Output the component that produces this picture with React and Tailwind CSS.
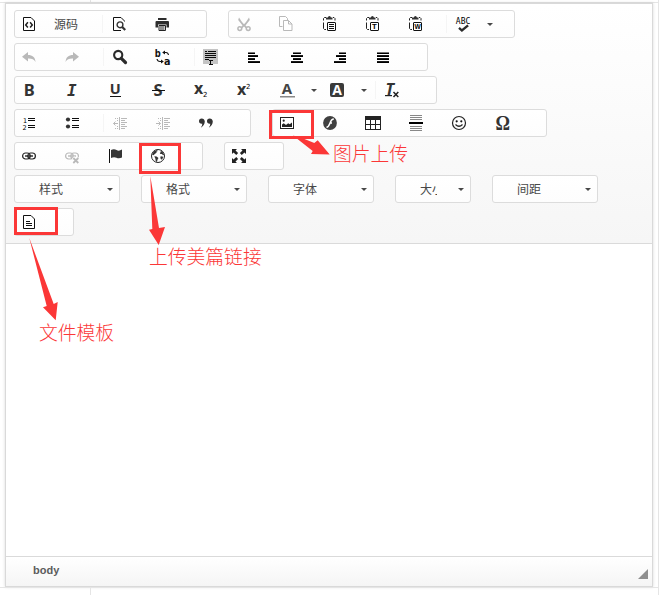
import React from "react";

const K = "#0d0d0d";
const G = "#b9b9b9";

function Svg({ children, crisp }) {
  return (
    <svg
      width="16"
      height="16"
      viewBox="0 0 16 16"
      fill="none"
      className="block shrink-0 overflow-visible"
      shapeRendering={crisp ? "crispEdges" : "auto"}
    >
      {children}
    </svg>
  );
}

function Glyph({ x, y, size, weight = 700, color = "#333", italic, family = "Open Sans, sans-serif", children, len }) {
  return (
    <text
      x={x}
      y={y}
      fontSize={size}
      fontWeight={weight}
      fill={color}
      fontStyle={italic ? "italic" : "normal"}
      fontFamily={family}
      textLength={len}
      lengthAdjust={len ? "spacingAndGlyphs" : undefined}
    >
      {children}
    </text>
  );
}

// Solid blocks given as [x, y, width, height]
function Bars({ list, color = K }) {
  return list.map(([x, y, w, h], i) => <rect key={i} x={x} y={y} width={w} height={h} fill={color} />);
}

function Page({ children }) {
  return (
    <Svg>
      <path d="M2.500 1.500h7.500l3.500 3.500v9.500h-11z" stroke="#111" fill="#fff" />
      {children}
    </Svg>
  );
}

const Source = () => (
  <Page>
    <path d="M6.900 6.300 4.700 8.900l2.200 2.600M9.100 6.300l2.200 2.600-2.200 2.600" stroke="#222" strokeWidth="1.500" />
  </Page>
);

const Preview = () => (
  <Svg>
    <path d="M13.500 5.500V5L10 1.500H2.500v13h7.500" stroke="#111" />
    <circle cx="9" cy="8.800" r="2.900" stroke="#333" strokeWidth="1.400" fill="#fff" />
    <path d="m11.200 11 3 3" stroke="#333" strokeWidth="2.200" />
  </Svg>
);

const Print = () => (
  <Svg>
    <path d="M4 2h8.500v2H4zM2.500 5h11.500q1 0 1 1v5.500h-2.500V8.500h-8.500v3H1.500V6q0-1 1-1z" fill="#2d2d2d" />
    <path d="M5 9.500h6.500v5H5z" fill="#fff" stroke="#222" />
    <path d="M6 11h4.500M6 13h4.500" stroke="#222" />
  </Svg>
);

const Cut = () => (
  <Svg>
    <path d="M4 1.500 7 6l2 2.300L11 6l3-4.500.8 2.500-4.300 5.500 2 2-1.300 1.200L9 10.500l-2.200 2.200-1.300-1.200 2-2L3.200 4z" fill={G} />
    <circle cx="4.800" cy="12.600" r="1.900" stroke={G} strokeWidth="1.500" />
    <circle cx="13.200" cy="12.600" r="1.900" stroke={G} strokeWidth="1.500" />
  </Svg>
);

const Copy = () => (
  <Svg>
    <path d="M4.500 10.500h-3v-10h6l2 2V4" stroke={G} />
    <path d="M5.500 4.500h5l3.500 3.500v6.500H5.500z" stroke={G} fill="#fff" />
    <path d="M10.500 4.500V8H14" stroke={G} />
  </Svg>
);

function Clipboard({ children }) {
  return (
    <Svg>
      <path d="M5 1.500H3.500l-1 1v2M2.500 6.500v6l1 1H5M12 1.500h1l1 1v2" stroke="#222" />
      <path d="M5 3.500V1.500h1.900Q7 0 8.400 0t1.500 1.500h1.600v2z" fill="#333" />
      <rect x="6.500" y="6.500" width="8" height="8" rx=".5" fill="#fff" stroke="#111" />
      {children}
    </Svg>
  );
}

const Paste = () => (
  <Clipboard>
    <path d="M8 8.500h5M8 10.500h5M8 12.500h5" stroke="#111" />
  </Clipboard>
);
const PasteText = () => (
  <Clipboard>
    <Glyph x="8.100" y="13.200" size="7.800" color="#000" family="Liberation Sans, sans-serif">T</Glyph>
  </Clipboard>
);
const PasteWord = () => (
  <Clipboard>
    <Glyph x="7.500" y="13" size="7.500" color="#000" len={6.200} family="Liberation Sans, sans-serif">W</Glyph>
  </Clipboard>
);

const Spell = () => (
  <Svg>
    <Glyph x="0.800" y="8" size="9.500" weight={400} color="#000" len={14.500} family="DejaVu Sans Mono, monospace">ABC</Glyph>
    <path d="m4 11.800 2.900 2.700 6.200-5.200" stroke="#2b2b2b" strokeWidth="2.300" />
  </Svg>
);

const Undo = () => (
  <Svg>
    <path d="M1 7.700 7 3v2.900c4.500 0 7 2 7.500 7.100C12.800 10.200 11 9.500 7 9.600v3z" fill={G} />
  </Svg>
);
const Redo = () => (
  <Svg>
    <path d="M15 7.700 9 3v2.900c-4.500 0-7 2-7.500 7.100C3.200 10.200 5 9.500 9 9.600v3z" fill={G} />
  </Svg>
);

const Find = () => (
  <Svg>
    <circle cx="6.200" cy="6" r="4.100" stroke="#2b2b2b" strokeWidth="2.100" />
    <path d="m9.300 9.300 4.200 4.200" stroke="#2b2b2b" strokeWidth="3.200" strokeLinecap="round" />
  </Svg>
);

const Replace = () => (
  <Svg>
    <Glyph x="-0.300" y="7.500" size="10" weight={700} color="#111" family="DejaVu Sans, sans-serif" len={6}>b</Glyph>
    <Glyph x="9" y="15.500" size="11" weight={700} color="#111" family="DejaVu Sans, sans-serif" len={6.500}>a</Glyph>
    <path d="M9.500 3.500h1.500q2 0 2.500 2.500M2 10q.5 2.500 3 2.500h1" stroke="#111" strokeWidth="1.100" />
    <path d="m7.200 3.500 2.800-2v4zM8.800 12.500l-2.800-2v4z" fill="#111" />
  </Svg>
);

const SelectAll = () => (
  <Svg crisp>
    <rect x="0" y="0" width="15" height="15" fill="#c4c4c4" />
    <Bars list={[[2, 2, 2, 1], [5, 2, 8, 1], [2, 4, 11, 1], [2, 6, 11, 1], [2, 8, 11, 1], [2, 10, 4, 1], [6, 11, 4, 1], [7, 12, 1, 3], [6, 15, 4, 1]]} />
  </Svg>
);

// Each text line is a soft upper edge over a black lower one
function Lines({ rows }) {
  return (
    <Svg crisp>
      {rows.map(([x, w], i) => (
        <g key={i}>
          <rect x={x} y={3 + i * 3} width={w} height="1" fill={i === 0 ? "#777" : "#1a1a1a"} />
          <rect x={x} y={4 + i * 3} width={w} height="1" fill="#000" />
        </g>
      ))}
    </Svg>
  );
}
const Left = () => <Lines rows={[[2, 7], [2, 10], [2, 7], [2, 12]]} />;
const Center = () => <Lines rows={[[4, 8], [2, 12], [4, 8], [2, 12]]} />;
const Right = () => <Lines rows={[[7, 7], [4, 10], [7, 7], [2, 12]]} />;
const Justify = () => <Lines rows={[[2, 12], [2, 12], [2, 12], [2, 12]]} />;

const Bold = () => <Svg><Glyph x="2.800" y="13.700" size="16.500" family="Noto Sans, sans-serif" color="#333">B</Glyph></Svg>;
const Italic = () => <Svg><Glyph x="3" y="13.600" size="16" italic family="DejaVu Sans Mono, monospace">I</Glyph></Svg>;
const Underline = () => (
  <Svg>
    <Glyph x="2.800" y="12.300" size="14.500">U</Glyph>
    <rect x="3" y="14" width="11" height="1" fill="#111" />
  </Svg>
);
const Strike = () => (
  <Svg>
    <Glyph x="3.600" y="13.700" size="16.500">S</Glyph>
    <rect x="2" y="8" width="13" height="1" fill="#111" />
  </Svg>
);
const Sub = () => (
  <Svg>
    <Glyph x="1" y="12.300" size="16">x</Glyph>
    <Glyph x="10" y="14.500" size="7" weight={400} color="#000" family="DejaVu Sans, sans-serif">2</Glyph>
  </Svg>
);
const Sup = () => (
  <Svg>
    <Glyph x="1" y="13.300" size="16">x</Glyph>
    <Glyph x="10" y="7" size="7" weight={400} color="#000" family="DejaVu Sans, sans-serif">2</Glyph>
  </Svg>
);
const TextColor = () => (
  <Svg>
    <Glyph x="2.800" y="12" size="15" color="#444">A</Glyph>
    <rect x="1" y="14" width="15" height="1.500" fill="#888" />
  </Svg>
);
const BgColor = () => (
  <Svg>
    <rect x="1" y="1" width="14" height="14" rx="2" fill="#3a3a3a" />
    <Glyph x="3.200" y="12.700" size="14" color="#fff">A</Glyph>
  </Svg>
);
const ClearFormat = () => (
  <Svg>
    <Glyph x="1.500" y="12.500" size="16" italic>T</Glyph>
    <rect x="1" y="13" width="7" height="1.200" fill="#222" />
    <path d="m9.500 10 4.800 5m0-5-4.800 5" stroke="#222" strokeWidth="1.500" />
  </Svg>
);

const Numbered = () => (
  <Svg>
    <Glyph x="2" y="7.500" size="6.500" weight={400} color="#000" family="DejaVu Sans, sans-serif">1</Glyph>
    <Glyph x="1.500" y="14.500" size="6.500" weight={400} color="#000" family="DejaVu Sans, sans-serif">2</Glyph>
    <Bars list={[[7, 3, 7, 1], [7, 5, 7, 1], [7, 10, 7, 1], [7, 12, 7, 1]]} />
  </Svg>
);
const Bulleted = () => (
  <Svg>
    <circle cx="4" cy="4.500" r="2.100" fill="#333" />
    <circle cx="4" cy="11.500" r="2.100" fill="#333" />
    <Bars list={[[8, 3, 7, 1], [8, 5, 7, 1], [8, 10, 7, 1], [8, 12, 7, 1]]} />
  </Svg>
);
function IndentBase({ children }) {
  return (
    <Svg>
      <Bars color={G} list={[[7, 2, 1, 13], [9, 3, 6, 1], [9, 5, 4, 1], [9, 7, 6, 1], [9, 9, 4, 1], [9, 11, 6, 1], [9, 13, 4, 1], [3, 3, 1, 1], [5, 3, 1, 1], [3, 13, 1, 1], [5, 13, 1, 1], [5, 5, 1, 1], [5, 11, 1, 1]]} />
      {children}
    </Svg>
  );
}
const Outdent = () => (
  <IndentBase>
    <path d="M1.500 8.500H6M3.500 6.500l-2 2 2 2" stroke={G} />
  </IndentBase>
);
const Indent = () => (
  <IndentBase>
    <path d="M1 8.500h4.500M3.500 6.500l2 2-2 2" stroke={G} />
  </IndentBase>
);
const Quote = () => (
  <Svg>
    <path d="M1 6q0-2.500 2.700-2.500T6.800 6.600Q6.800 10.500 2.500 13q2-2.500 1.800-4.300Q1 9 1 6zM9 6q0-2.500 2.700-2.500t3.100 3.100q0 3.900-4.300 6.400 2-2.500 1.800-4.300Q9 9 9 6z" fill="#333" />
  </Svg>
);
const Picture = () => (
  <Svg>
    <rect x="1.500" y="2.500" width="13" height="11" stroke="#222" fill="#fff" />
    <path d="M3 12V9.500l1.700-1.300L7 10l2.200-1.800 1.500 1L13 7.500V12z" fill="#222" />
    <circle cx="4.700" cy="5.700" r="1.100" fill="#222" />
  </Svg>
);
const Flash = () => (
  <Svg>
    <circle cx="8" cy="8" r="6.900" fill="#404040" />
    <path d="M11.800 4c-2.400 0-3 2-3.700 3.900C7.300 10 6.500 12 4.500 12.200M7.800 8H10" stroke="#fff" strokeWidth="1.500" />
  </Svg>
);
const Table = () => (
  <Svg crisp>
    <rect x="0" y="1" width="16" height="14" fill="#222" />
    <Bars color="#fff" list={[[1, 5, 4, 4], [6, 5, 4, 4], [11, 5, 4, 4], [1, 10, 4, 4], [6, 10, 4, 4], [11, 10, 4, 4]]} />
  </Svg>
);
const Rule = () => (
  <Svg crisp>
    <Bars color="#888" list={[[2, 0, 12, 1], [2, 2, 12, 1], [2, 4, 12, 1], [2, 11, 12, 1], [2, 13, 12, 1], [2, 15, 12, 1]]} />
    <rect x="1" y="7" width="14" height="2" fill="#000" />
  </Svg>
);
const Smiley = () => (
  <Svg>
    <circle cx="8" cy="8" r="6.500" stroke="#222" strokeWidth="1.200" />
    <circle cx="5.700" cy="6.300" r="1.100" fill="#111" />
    <circle cx="10.300" cy="6.300" r="1.100" fill="#111" />
    <path d="M4.500 9.500q3.500 3.500 7 0" stroke="#222" strokeWidth="1.200" />
  </Svg>
);
const Omega = () => <Svg><Glyph x="1.500" y="15" size="20" len={14.500} family="Liberation Serif, serif">Ω</Glyph></Svg>;

const chain = (c) => (
  <>
    <rect x="1.600" y="5" width="7.600" height="6" rx="3" stroke={c} strokeWidth="1.200" />
    <rect x="6.800" y="5" width="7.600" height="6" rx="3" stroke={c} strokeWidth="1.200" />
    <path d="M4 8h8" stroke={c} strokeWidth="1.400" />
  </>
);
const Link = () => <Svg>{chain("#222")}</Svg>;
const Unlink = () => (
  <Svg>
    {chain(G)}
    <path d="m9 9.500 5.500 5.500m0-5.500L9 15" stroke="#fff" strokeWidth="3.200" />
    <path d="m9.300 10 5 5m0-5-5 5" stroke={G} strokeWidth="1.800" />
  </Svg>
);
const Flag = () => (
  <Svg>
    <rect x="2" y="1" width="1" height="14" fill="#111" />
    <path d="M4 2q3-1.500 5.500 0t5.500-.5v8q-3 1.500-5.500.3T4 10z" fill="#353535" />
  </Svg>
);
const Globe = () => (
  <Svg>
    <circle cx="8" cy="8" r="6.500" stroke="#222" fill="#fff" />
    <path d="M2.400 5.500 4.300 2.900 7 1.900l.8 1.200-1.500.6.300 1.100-1.900 1.100-.9 1.300-1.600-.4zM4.300 8.300l2.300.3 1.900 1.500-.9 1.500-.7 2.300-1.200-.8-.3-2.300zM10.200 2.300l2.600 1.900 1.300 2.600-1.100.4-1-1.300-1.600.2-.6-1.100 1.100-1zM10.700 8.200l2.500.5-.9 2.500-1.100.3-.9-1.500z" fill="#333" />
  </Svg>
);
const Maximize = () => (
  <Svg>
    <path d="M1 1h5L4.500 2.500l2.600 2.600-1.800 1.800-2.800-2.400L1 6zM15 1v5l-1.500-1.500-2.800 2.400-1.800-1.800 2.600-2.600L10 1zM1 15v-5l1.500 1.500 2.800-2.400 1.800 1.800-2.600 2.600L6 15zM15 15h-5l1.500-1.500-2.600-2.600 1.800-1.800 2.800 2.400L15 10z" fill="#222" />
  </Svg>
);
const Template = () => (
  <Page>
    <path d="M5 7.500h4M5 9.500h6M5 11.500h6" stroke="#111" />
  </Page>
);

function Caret() {
  return <span className="block h-0 w-0 border-x-[3px] border-t-[3px] border-x-transparent border-t-[#484848]" />;
}

function Btn({ icon: Icon, arrow }) {
  return (
    <button className={arrow ? "flex h-[26px] w-[50px] shrink-0 items-center pl-[6px]" : "flex h-[26px] w-[43px] shrink-0 items-center pl-[6px]"}>
      <Icon />
      {arrow && <span className="ml-4"><Caret /></span>}
    </button>
  );
}

const Sep = () => <span className="ml-[2px] mr-[2px] h-[18px] w-px shrink-0 self-center bg-[#f5f5f5]" />;

function Group({ children }) {
  return (
    <div className="flex h-7 shrink-0 rounded-[3px] border border-[#dcdcdc] bg-linear-to-b from-white to-[#fdfdfd] pr-[15px]">
      {children}
    </div>
  );
}

function Combo({ label, small }) {
  return (
    <div
      className={
        (small ? "w-[76px]" : "w-[106px]") +
        " flex h-7 shrink-0 items-center justify-between rounded-[3px] border border-[#dcdcdc] bg-linear-to-b from-white to-[#fdfdfd] pl-6 pr-[6px] text-xs text-[#484848]"
      }
    >
      <span className={(small ? "w-[17px] overflow-hidden" : "") + " pt-[2px] whitespace-nowrap"}>{label}</span>
      <Caret />
    </div>
  );
}

const Row = ({ children }) => <div className="flex h-7 gap-[21px]">{children}</div>;

function Note({ className, children }) {
  return <div className={"absolute whitespace-nowrap text-[18.8px] leading-6 font-light text-[#fb3737] " + className}>{children}</div>;
}

export default function App() {
  return (
    <div className="relative flex h-[595px] w-[663px] flex-col overflow-hidden bg-white font-['Open_Sans','Noto_Sans_CJK_SC',sans-serif]">
      <div className="flex h-[3px] w-[659px] shrink-0 border-r border-b border-[#e5e5e5]">
        <div className="w-[91px] border-r border-[#e5e5e5]" />
      </div>
      <div className="h-[584px] w-[659px] shrink-0 border-r border-[#e5e5e5] pl-[5px]">
        <div className="flex h-[584px] w-[648px] flex-col border border-[#d9d9d9] shadow-[0_0_3px_rgba(0,0,0,0.15)]">
          <div className="flex h-[240px] shrink-0 flex-col gap-[5px] border-b border-[#dadada] bg-linear-to-b from-white to-[#f6f6f6] pt-[6px] pl-2">
            <Row>
              <Group>
                <button className="flex h-[26px] w-[85px] items-center pl-[6px] text-xs text-[#484848]">
                  <Source />
                  <span className="ml-[17px] pt-px whitespace-nowrap">源码</span>
                </button>
                <Sep />
                <Btn icon={Preview} />
                <Btn icon={Print} />
              </Group>
              <Group>
                <Btn icon={Cut} />
                <Btn icon={Copy} />
                <Btn icon={Paste} />
                <Btn icon={PasteText} />
                <Btn icon={PasteWord} />
                <Sep />
                <Btn icon={Spell} arrow />
              </Group>
            </Row>
            <Row>
              <Group>
                <Btn icon={Undo} />
                <Btn icon={Redo} />
                <Sep />
                <Btn icon={Find} />
                <Btn icon={Replace} />
                <Sep />
                <Btn icon={SelectAll} />
                <Btn icon={Left} />
                <Btn icon={Center} />
                <Btn icon={Right} />
                <Btn icon={Justify} />
              </Group>
            </Row>
            <Row>
              <Group>
                <Btn icon={Bold} />
                <Btn icon={Italic} />
                <Btn icon={Underline} />
                <Btn icon={Strike} />
                <Btn icon={Sub} />
                <Btn icon={Sup} />
                <Btn icon={TextColor} arrow />
                <Btn icon={BgColor} arrow />
                <Sep />
                <Btn icon={ClearFormat} />
              </Group>
            </Row>
            <Row>
              <Group>
                <Btn icon={Numbered} />
                <Btn icon={Bulleted} />
                <Sep />
                <Btn icon={Outdent} />
                <Btn icon={Indent} />
                <Btn icon={Quote} />
              </Group>
              <Group>
                <Btn icon={Picture} />
                <Btn icon={Flash} />
                <Btn icon={Table} />
                <Btn icon={Rule} />
                <Btn icon={Smiley} />
                <Btn icon={Omega} />
              </Group>
            </Row>
            <Row>
              <Group>
                <Btn icon={Link} />
                <Btn icon={Unlink} />
                <Btn icon={Flag} />
                <Btn icon={Globe} />
              </Group>
              <Group>
                <Btn icon={Maximize} />
              </Group>
            </Row>
            <Row>
              <Combo label="样式" />
              <Combo label="格式" />
              <Combo label="字体" />
              <Combo label="大小" small />
              <Combo label="间距" />
            </Row>
            <Row>
              <Group>
                <Btn icon={Template} />
              </Group>
            </Row>
          </div>
          <div className="grow bg-white" />
          <div className="flex h-[30px] shrink-0 justify-between border-t border-[#dadada] bg-linear-to-b from-white to-[#f5f5f5] pr-1 pl-[27px]">
            <span className="pt-[5px] font-['Liberation_Sans',sans-serif] text-[11px] leading-4 font-bold text-[#5c5c5c]">body</span>
            <svg width="10" height="10" className="mt-3">
              <path d="M10 0v10H0z" fill="#8f8f8f" />
            </svg>
          </div>
        </div>
      </div>
      <div className="flex h-2 w-[659px] shrink-0 border-t border-r border-[#e5e5e5]">
        <div className="w-[91px] border-r border-[#e5e5e5]" />
      </div>

      <div className="absolute top-[110px] left-[269px] h-[29px] w-[45px] border-3 border-[#fb3737]" />
      <div className="absolute top-[143px] left-[139px] h-[31px] w-[42px] border-3 border-[#fb3737]" />
      <div className="absolute top-[207px] left-[14px] h-[28px] w-[44px] border-3 border-[#fb3737]" />
      <svg width="663" height="595" className="pointer-events-none absolute top-0 left-0" fill="#fb3737">
        <path d="M293 135.500 302 138l12.300 5 3.400-2.700 12 14.200-18.700-.5 1.700-3z" />
        <path d="m150.300 176 8.700 52 6-1-6.300 18-9.700-15.300 3.300-.7z" />
        <path d="m29.300 238 24.400 66 4-2-2 18.300L43 307.300l3.700-1.300z" />
      </svg>
      <Note className="top-[142px] left-[333px]">图片上传</Note>
      <Note className="top-[245px] left-[149px]">上传美篇链接</Note>
      <Note className="top-[321px] left-[39px]">文件模板</Note>
    </div>
  );
}
